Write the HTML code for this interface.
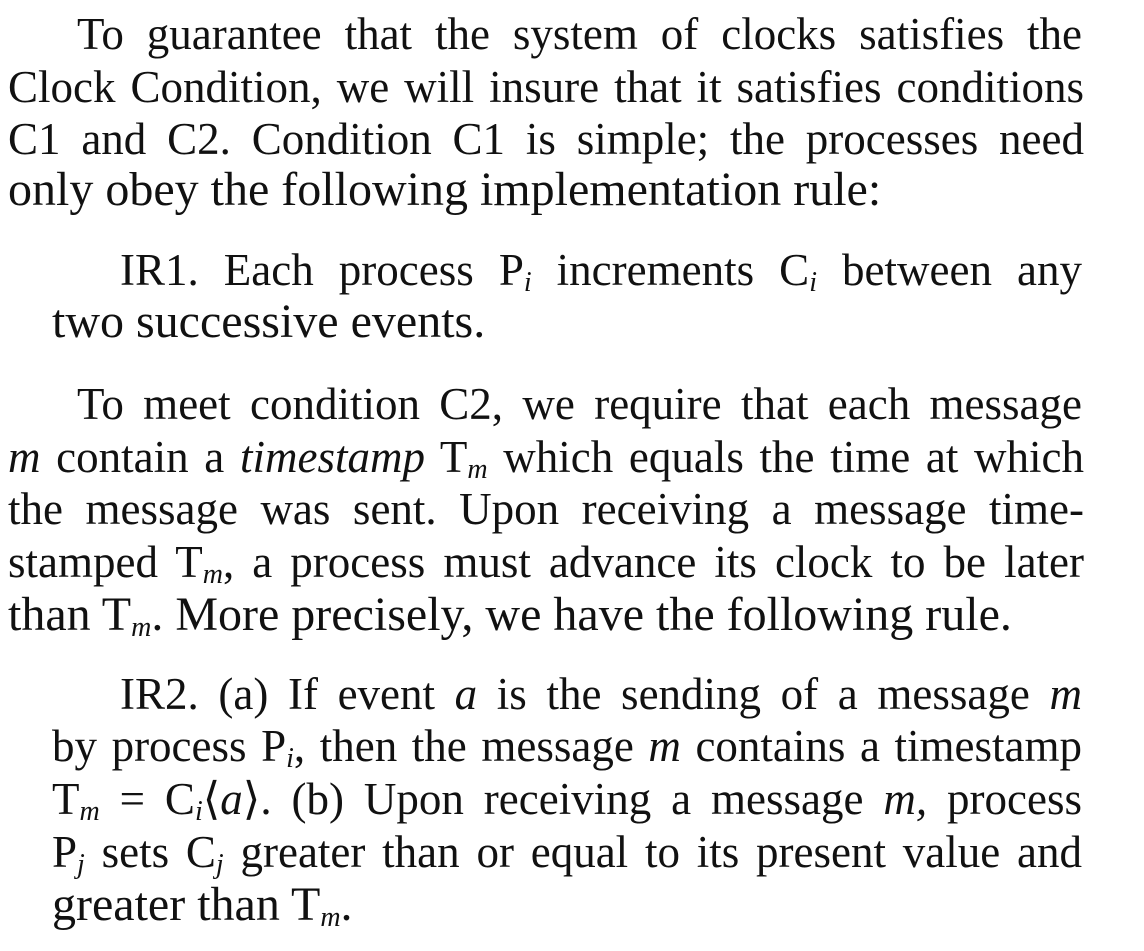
<!DOCTYPE html>
<html><head><meta charset="utf-8"><style>
html,body{margin:0;padding:0;background:#fff;}
body{width:1144px;height:951px;position:relative;overflow:hidden;font-family:"Liberation Serif",serif;font-size:45px;color:#111;}
.l{position:absolute;height:52px;line-height:52px;white-space:nowrap;text-align:justify;text-align-last:justify;}
.n{text-align-last:left;font-size:48px;}
sub{font-size:28px;vertical-align:-6px;line-height:0;font-style:italic;}
i{font-style:italic;}
</style></head><body>
<div class="l" style="top:8px;left:77px;width:1005px">To guarantee that the system of clocks satisfies the</div>
<div class="l" style="top:61px;left:8px;width:1076px">Clock Condition, we will insure that it satisfies conditions</div>
<div class="l" style="top:113px;left:8px;width:1076px">C1 and C2. Condition C1 is simple; the processes need</div>
<div class="l n" style="top:164px;left:8px;width:1076px">only obey the following implementation rule:</div>
<div class="l" style="top:244px;left:120px;width:962px">IR1. Each process P<sub>i</sub> increments C<sub>i</sub> between any</div>
<div class="l n" style="top:296px;left:52px;width:1030px">two successive events.</div>
<div class="l" style="top:378px;left:77px;width:1005px">To meet condition C2, we require that each message</div>
<div class="l" style="top:431px;left:8px;width:1076px"><i>m</i> contain a <i>timestamp</i> T<sub>m</sub> which equals the time at which</div>
<div class="l" style="top:483px;left:8px;width:1076px">the message was sent. Upon receiving a message time-</div>
<div class="l" style="top:536px;left:8px;width:1076px">stamped T<sub>m</sub>, a process must advance its clock to be later</div>
<div class="l n" style="top:589px;left:8px;width:1076px">than T<sub>m</sub>. More precisely, we have the following rule.</div>
<div class="l" style="top:668px;left:120px;width:962px">IR2. (a) If event <i>a</i> is the sending of a message <i>m</i></div>
<div class="l" style="top:720px;left:52px;width:1030px">by process P<sub>i</sub>, then the message <i>m</i> contains a timestamp</div>
<div class="l" style="top:773px;left:52px;width:1030px">T<sub>m</sub> = C<sub>i</sub>⟨<i>a</i>⟩. (b) Upon receiving a message <i>m,</i> process</div>
<div class="l" style="top:826px;left:52px;width:1030px">P<sub>j</sub> sets C<sub>j</sub> greater than or equal to its present value and</div>
<div class="l n" style="top:879px;left:52px;width:1030px">greater than T<sub>m</sub>.</div>
</body></html>
